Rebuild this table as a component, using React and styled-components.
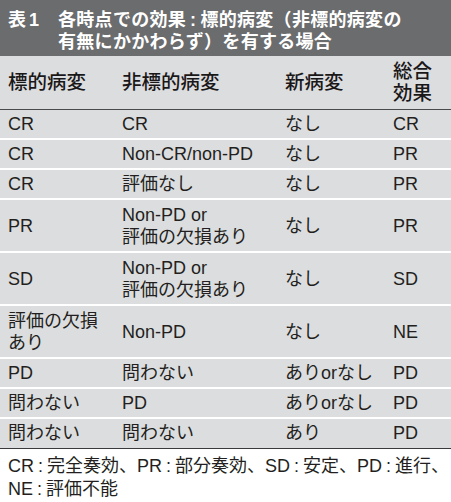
import React from "react";
import styled, { createGlobalStyle } from "styled-components";

const GlobalStyle = createGlobalStyle`
  html, body {
    margin: 0;
    padding: 0;
    background: #ffffff;
  }
  body {
    font-family: "Liberation Sans", "Noto Sans CJK JP", sans-serif;
    color: #231f20;
  }
`;

// rows of the table: [target, non-target, new lesion, overall]
const rows = [
  { cells: ["CR", "CR", "なし", "CR"] },
  { cells: ["CR", "Non-CR/non-PD", "なし", "PR"] },
  { cells: ["CR", "評価なし", "なし", "PR"] },
  { cells: ["PR", ["Non-PD or", "評価の欠損あり"], "なし", "PR"], tall: true },
  { cells: ["SD", ["Non-PD or", "評価の欠損あり"], "なし", "SD"], tall: true },
  { cells: [["評価の欠損", "あり"], "Non-PD", "なし", "NE"], tall: true },
  { cells: ["PD", "問わない", "ありorなし", "PD"] },
  { cells: ["問わない", "PD", "ありorなし", "PD"] },
  { cells: ["問わない", "問わない", "あり", "PD"], last: true },
];

const notes = [
  ["CR", "完全奏効、"],
  ["PR", "部分奏効、"],
  ["SD", "安定、"],
  ["PD", "進行、"],
];

const renderLines = (value) =>
  Array.isArray(value)
    ? value.map((line, i) => (
        <React.Fragment key={i}>
          {i > 0 && <br />}
          {line}
        </React.Fragment>
      ))
    : value;

const App = () => (
  <>
    <GlobalStyle />
    <Wrapper>
      <TitleBar>
        <TitleLabel>表1</TitleLabel>
        <TitleText>
          各時点での効果<TitleColon>:</TitleColon>標的病変（非標的病変の
          <br />
          有無にかかわらず）を有する場合
        </TitleText>
      </TitleBar>
      <Table>
        <colgroup>
          <col style={{ width: 114 }} />
          <col style={{ width: 163 }} />
          <col style={{ width: 108 }} />
          <col />
        </colgroup>
        <thead>
          <tr>
            <HeadCell>標的病変</HeadCell>
            <HeadCell>非標的病変</HeadCell>
            <HeadCell>新病変</HeadCell>
            <HeadCell>
              総合
              <br />
              効果
            </HeadCell>
          </tr>
        </thead>
        <tbody>
          {rows.map((row, index) => (
            <tr key={index}>
              {row.cells.map((cell, i) => (
                <BodyCell key={i} $tall={row.tall} $last={row.last}>
                  {renderLines(cell)}
                </BodyCell>
              ))}
            </tr>
          ))}
        </tbody>
      </Table>
      <Footnote>
        {notes.map(([abbr, text]) => (
          <React.Fragment key={abbr}>
            {abbr}
            <NoteColon>:</NoteColon>
            {text}
          </React.Fragment>
        ))}
        <br />
        NE<NoteColon>:</NoteColon>評価不能
      </Footnote>
    </Wrapper>
  </>
);

const Wrapper = styled.div`
  width: 451px;
  height: 502px;
  overflow: hidden;
  background: #ffffff;
`;

const TitleBar = styled.div`
  display: flex;
  align-items: flex-start;
  height: 56px;
  padding: 9px 0 0 8px;
  box-sizing: border-box;
  background: #6b6c6e;
  color: #ffffff;
  font-family: "Liberation Sans", "Noto Sans CJK JP", sans-serif;
  font-weight: 700;
  font-size: 18px;
  line-height: 22px;
`;

const TitleLabel = styled.div`
  width: 50px;
  flex-shrink: 0;
  letter-spacing: 3px;
`;

const TitleText = styled.div`
  letter-spacing: 0.3px;
`;

const TitleColon = styled.span`
  margin: 0 4px;
`;

const Table = styled.table`
  width: 451px;
  border-collapse: collapse;
  table-layout: fixed;
  background: #dcdddf;
  font-size: 18px;
`;

const HeadCell = styled.th`
  height: 53px;
  padding: 0 0 0 8px;
  box-sizing: border-box;
  text-align: left;
  vertical-align: middle;
  font-family: "Liberation Sans", "Noto Sans CJK JP", sans-serif;
  font-weight: 500;
  font-size: 19.5px;
  line-height: 22px;
  color: #1a1718;
  border-bottom: 1px solid #4a4a4c;
`;

const BodyCell = styled.td`
  height: ${(props) => (props.$tall ? "53px" : "30px")};
  padding: 0 0 0 8px;
  box-sizing: border-box;
  vertical-align: middle;
  line-height: 22px;
  white-space: nowrap;
  border-bottom: ${(props) =>
    props.$last ? "1px solid #3a3a3c" : "2px solid #ffffff"};
`;

const Footnote = styled.div`
  padding: 6px 0 0 8px;
  font-size: 18px;
  line-height: 23px;
  white-space: nowrap;
`;

const NoteColon = styled.span`
  margin: 0 4px;
`;

export default App;
